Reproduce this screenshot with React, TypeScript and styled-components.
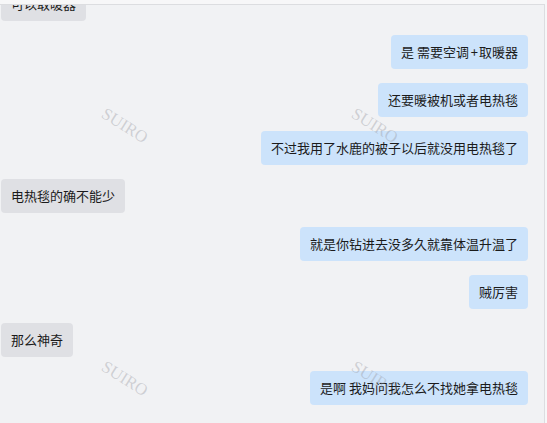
import React from 'react';
import styled, { createGlobalStyle } from 'styled-components';

const GlobalStyle = createGlobalStyle`
    html, body {
        margin: 0;
        padding: 0;
        background: #f7f7f8;
        font-family: 'Noto Sans CJK SC', 'Noto Sans', sans-serif;
    }
`;

type Message = { text: string; mine: boolean };

const messages: Message[] = [
    { text: '可以取暖器', mine: false },
    { text: '是 需要空调 + 取暖器', mine: true },
    { text: '还要暖被机或者电热毯', mine: true },
    { text: '不过我用了水鹿的被子以后就没用电热毯了', mine: true },
    { text: '电热毯的确不能少', mine: false },
    { text: '就是你钻进去没多久就靠体温升温了', mine: true },
    { text: '贼厉害', mine: true },
    { text: '那么神奇', mine: false },
    { text: '是啊 我妈问我怎么不找她拿电热毯', mine: true },
];

const Panel = styled.div`
    position: relative;
    margin-top: 4px;
    width: 544px;
    height: 418px;
    background: #f1f2f4;
    border-top: 1px solid #dcdde0;
    border-right: 1px solid #dcdde0;
    overflow: hidden;
`;

const List = styled.div`
    display: flex;
    flex-direction: column;
    gap: 14px;
    margin-top: -18px;
    padding: 0 16px 0 1px;
`;

const Row = styled.div<{ $mine: boolean }>`
    display: flex;
    justify-content: ${p => (p.$mine ? 'flex-end' : 'flex-start')};
`;

const Bubble = styled.div<{ $mine: boolean }>`
    padding: 8px 10px;
    font-size: 13px;
    line-height: 18px;
    color: #1b1b1b;
    border-radius: 4px;
    white-space: nowrap;
    background: ${p => (p.$mine ? '#cce3fb' : '#dfe0e4')};
`;

const Plus = styled.span`
    letter-spacing: -1px;
`;

const Watermarks = styled.div`
    position: absolute;
    top: -6px;
    left: 0;
    display: grid;
    grid-template-columns: 250px 250px;
    grid-template-rows: 253px 253px;
    place-items: center;
    pointer-events: none;
`;

const Mark = styled.span`
    font-family: 'Liberation Serif', serif;
    font-size: 17px;
    color: rgba(150, 150, 158, 0.38);
    transform: rotate(32deg);
`;

export default function App() {
    return (
        <>
            <GlobalStyle />
            <Panel>
                <List>
                    {messages.map((m, i) => (
                        <Row key={i} $mine={m.mine}>
                            <Bubble $mine={m.mine}>
                                {m.text.includes(' + ') ? (
                                    <>
                                        {m.text.split(' + ')[0]}
                                        <Plus> + </Plus>
                                        {m.text.split(' + ')[1]}
                                    </>
                                ) : (
                                    m.text
                                )}
                            </Bubble>
                        </Row>
                    ))}
                </List>
                <Watermarks>
                    <Mark>SUIRO</Mark>
                    <Mark>SUIRO</Mark>
                    <Mark>SUIRO</Mark>
                    <Mark>SUIRO</Mark>
                </Watermarks>
            </Panel>
        </>
    );
}
